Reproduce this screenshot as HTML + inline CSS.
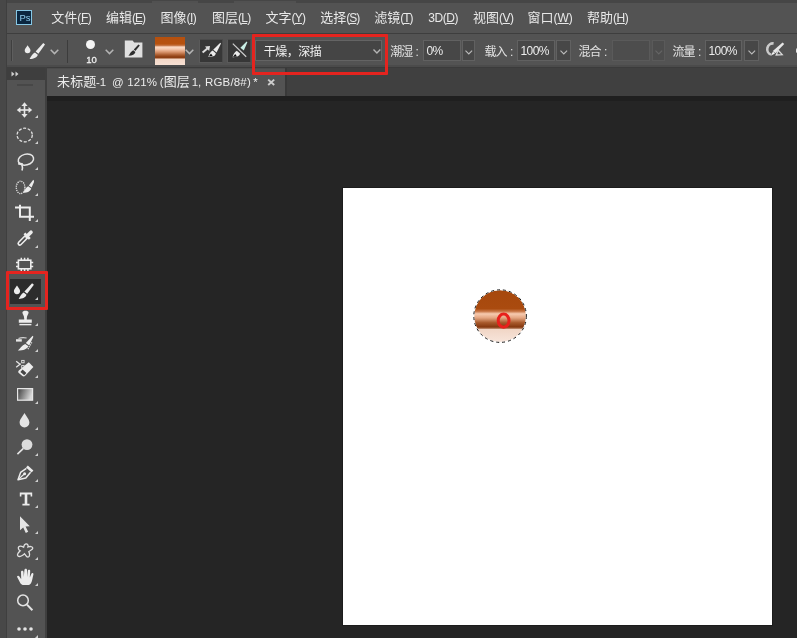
<!DOCTYPE html>
<html lang="zh-CN">
<head>
<meta charset="utf-8">
<title>Photoshop</title>
<style>
html,body{margin:0;padding:0;}
body{will-change:transform;width:797px;height:638px;overflow:hidden;background:#252525;position:relative;font-family:"Liberation Sans","Noto Sans CJK SC",sans-serif;font-size:13px;color:#e6e6e6;}
.abs{position:absolute;}
#topstrip{left:0;top:0;width:797px;height:3px;background:#464646;}
#menubar{left:0;top:3px;width:797px;height:30px;background:#535353;}
#menuline{left:0;top:33px;width:797px;height:1px;background:#3e3e3e;}
#optbar{left:0;top:34px;width:797px;height:31px;background:#535353;}
#optline{left:0;top:65px;width:797px;height:2px;background:#4b4b4b;}
#optline2{left:47px;top:67px;width:750px;height:2.300px;background:#3b3b3b;}
#tabbar{left:0;top:68px;width:797px;height:28px;background:#404040;}
#tab{left:47px;top:68px;width:237.500px;height:28px;background:#535353;border-top:1px solid #4c4c4c;box-sizing:border-box;}
#tabsep{left:284.500px;top:68px;width:2px;height:28px;background:#393939;}
#toolbar{left:0;top:67px;width:47px;height:571px;background:#535353;}
#toolhead{left:7px;top:66.500px;width:38px;height:13px;background:#3e3e3e;}
#leftstrip{left:0;top:0;width:7px;height:638px;background:#484848;border-right:1px solid #3f3f3f;box-sizing:border-box;}
#toolsep{left:44.500px;top:67px;width:2.500px;height:571px;background:#3f3f3f;}
#canvasbg{left:47px;top:96px;width:750px;height:542px;background:#252525;border-top:5px solid #1f1f1f;box-sizing:border-box;}
#doc{left:343px;top:188px;width:429px;height:437px;background:#fff;box-shadow:0 0 0 1px #1c1c1c;}
.mi{top:9px;height:18px;line-height:18px;white-space:nowrap;font-size:13px;color:#e8e8e8;}
.la{font-size:12px;}
.mi u{text-decoration:underline;text-underline-offset:1px;}
.lbl i{font-style:normal;margin-left:3.200px;}
.lbl{top:42.500px;height:18px;line-height:18px;white-space:nowrap;font-size:12px;color:#e2e2e2;letter-spacing:-0.900px;}
.fld{top:40px;height:20.500px;background:#474747;border:1px solid #616161;box-sizing:border-box;font-size:12px;line-height:20.500px;color:#ececec;padding-left:2.500px;letter-spacing:-0.550px;white-space:nowrap;}
.dis{background:#4d4d4d !important;border-color:#5a5a5a !important;}
.chv{top:40px;height:20.500px;width:15px;background:#474747;border:1px solid #616161;box-sizing:border-box;}
</style>
</head>
<body>
<div class="abs" id="topstrip"></div>
<div class="abs" id="menubar"></div>
<div class="abs" style="left:152px;top:0.500px;width:46px;height:2px;background:#565656;opacity:0.700;"></div>
<div class="abs" style="left:234px;top:0.500px;width:62px;height:2px;background:#565656;opacity:0.700;"></div>
<div class="abs" id="menuline"></div>
<div class="abs" id="optbar"></div>
<div class="abs" id="optline"></div>
<div class="abs" id="optline2"></div>
<div class="abs" id="tabbar"></div>
<div class="abs" id="canvasbg"></div>
<div class="abs" id="tab"></div>
<div class="abs" id="tabsep"></div>
<div class="abs" id="toolbar"></div>
<div class="abs" id="leftstrip"></div>
<div class="abs" id="toolsep"></div>
<div class="abs" id="toolhead"></div>
<div class="abs" id="doc"></div>

<!-- menu -->
<div class="abs mi" style="left:51.3px">文件<span class="la" style="letter-spacing:-0.41px">(<u>F</u>)</span></div>
<div class="abs mi" style="left:106.0px">编辑<span class="la" style="letter-spacing:-1.04px">(<u>E</u>)</span></div>
<div class="abs mi" style="left:160.4px">图像<span class="la" style="letter-spacing:-0.48px">(<u>I</u>)</span></div>
<div class="abs mi" style="left:211.9px">图层<span class="la" style="letter-spacing:-0.70px">(<u>L</u>)</span></div>
<div class="abs mi" style="left:265.6px">文字<span class="la" style="letter-spacing:-0.81px">(<u>Y</u>)</span></div>
<div class="abs mi" style="left:320.3px">选择<span class="la" style="letter-spacing:-1.04px">(<u>S</u>)</span></div>
<div class="abs mi" style="left:374.2px">滤镜<span class="la" style="letter-spacing:-0.98px">(<u>T</u>)</span></div>
<div class="abs mi" style="left:428.3px"><span class="la" style="letter-spacing:-0.44px">3D(<u>D</u>)</span></div>
<div class="abs mi" style="left:473.0px">视图<span class="la" style="letter-spacing:-0.57px">(<u>V</u>)</span></div>
<div class="abs mi" style="left:527.6px">窗口<span class="la" style="letter-spacing:-0.11px">(<u>W</u>)</span></div>
<div class="abs mi" style="left:587.0px">帮助<span class="la" style="letter-spacing:-0.43px">(<u>H</u>)</span></div>

<!-- Ps logo -->
<div class="abs" style="left:16px;top:9.500px;width:16px;height:15.200px;box-sizing:border-box;background:#0b2740;border:1px solid #86c8e6;"></div>
<div class="abs" style="left:19.600px;top:10.800px;width:12px;height:14px;line-height:14px;font-size:9.500px;color:#8fcdee;letter-spacing:-0.300px;white-space:nowrap;">Ps</div>

<!-- options bar: grip + tool preset -->
<div class="abs" style="left:11px;top:40px;width:1px;height:21px;background:#3f3f3f;"></div>
<div class="abs" style="left:12px;top:40px;width:1px;height:21px;background:#5e5e5e;"></div>
<svg class="abs" style="left:18px;top:36px" width="46" height="30" viewBox="18 36 46 30">
  <path d="M27.600 45.200 C28.800 47.200 30.500 48.700 30.500 50.300 A2.900 2.900 0 0 1 24.700 50.300 C24.700 48.700 26.400 47.200 27.600 45.200Z" fill="#ececec"/>
  <path d="M43.300 43 L45 44.400 L38.400 53.700 L35.600 51.500Z" fill="#ececec"/>
  <path d="M34.900 52.400 L37.800 54.700 C37.200 57.200 34 59 29.600 59.100 C30.800 56.600 32.200 54 34.900 52.400Z" fill="#ececec"/>
</svg>
<svg class="abs chev" style="left:50px;top:49px" width="9" height="6" viewBox="0 0 9 6"><path d="M0.7 0.8 L4.5 4.6 L8.3 0.8" fill="none" stroke="#b4b4b4" stroke-width="1.500"/></svg>
<div class="abs" style="left:67px;top:40px;width:1px;height:23px;background:#3c3c3c;"></div>

<!-- brush size -->
<div class="abs" style="left:86px;top:40px;width:9px;height:9px;border-radius:50%;background:#f4f4f4;"></div>
<div class="abs" style="left:80.500px;top:55.300px;width:22px;height:10px;line-height:10px;text-align:center;font-size:9.500px;color:#efefef;-webkit-text-stroke:0.300px #efefef;">10</div>
<svg class="abs chev" style="left:105px;top:49px" width="9" height="6" viewBox="0 0 9 6"><path d="M0.7 0.8 L4.5 4.6 L8.3 0.8" fill="none" stroke="#b4b4b4" stroke-width="1.500"/></svg>

<!-- brush panel icon -->
<svg class="abs" style="left:118px;top:34px" width="32" height="30" viewBox="118 34 32 30">
  <path d="M124.800 40.600 L132.600 40.600 L134.200 42.600 L142.400 42.600 L142.400 57.500 L124.800 57.500Z" fill="#e0e0e0"/>
  <path d="M138.400 44.400 L139.800 45.600 L135.400 51 L133.800 49.600Z" fill="#2e2e2e"/>
  <path d="M133.200 50.200 L135.400 52 C135 54.400 132.400 55.800 128.400 55.800 C129.800 54 130.800 51.400 133.200 50.200Z" fill="#2e2e2e"/>
</svg>

<!-- gradient swatch -->
<div class="abs" style="left:155px;top:37px;width:30px;height:28px;background:linear-gradient(to bottom,#b5500f 0px,#b7520f 7px,#c77645 8.5px,#fbd9c4 10px,#f6c9ae 12px,#d9956e 15px,#a95a2c 18px,#8a3a10 20px,#8f4216 21px,#f3d7c7 22px,#f7e0d3 28px);"></div>
<svg class="abs chev" style="left:185px;top:49px" width="9" height="6" viewBox="0 0 9 6"><path d="M0.7 0.8 L4.5 4.6 L8.3 0.8" fill="none" stroke="#b4b4b4" stroke-width="1.500"/></svg>

<!-- two toggle buttons -->
<div class="abs" style="left:199px;top:38.500px;width:24.300px;height:24.800px;box-sizing:border-box;background:#373737;border:1px solid #5a5a5a;border-top-color:#4a4a4a;border-right-color:#4a4a4a;"></div>
<div class="abs" style="left:227px;top:38.500px;width:23.500px;height:24.800px;box-sizing:border-box;background:#373737;border:1px solid #5a5a5a;border-top-color:#4a4a4a;border-right-color:#4a4a4a;"></div>
<svg class="abs" style="left:196px;top:36px" width="58" height="30" viewBox="196 36 58 30">
  <path d="M220.300 42.800 L221 43.600 L216.600 52.600 L213.200 49.800Z" fill="#ececec"/>
  <path d="M212.600 50.600 L215.800 53.300 C215.600 55.600 213.200 57.200 208.400 57 C209 54.600 210.200 52 212.600 50.600Z" fill="#ececec"/>
  <path d="M208.800 56.600 L211 53.600 L212.800 56.200Z" fill="#101010"/>
  <path d="M202.600 52.600 L207.400 48.600" stroke="#dedede" stroke-width="2" fill="none"/>
  <path d="M205 46.400 L210 46 L209.200 51Z" fill="#dedede"/>
  <path d="M246.600 41.400 L247.400 42.200 L243.800 50.600 L240.400 47.800Z" fill="#c9efe6"/>
  <path d="M236.800 50.800 L240 53.600 C239.800 55.800 237.400 57.400 232.600 57.200 C233.200 54.800 234.400 52.200 236.800 50.800Z" fill="#ececec"/>
  <path d="M232.900 56.900 L235.200 54 L237 56.400Z" fill="#101010"/>
  <path d="M232.800 43.600 L246.200 56.700" stroke="#cfcfcf" stroke-width="1.200" fill="none"/>
</svg>
<!-- preset dropdown -->
<div class="abs" style="left:255px;top:40px;width:127px;height:21px;box-sizing:border-box;background:#454545;border:1px solid #646464;"></div>
<div class="abs" style="left:263.800px;top:42.500px;height:18px;line-height:18px;font-size:12px;color:#f0f0f0;white-space:nowrap;letter-spacing:-0.500px;">干燥，深描</div>
<svg class="abs chev" style="left:372.800px;top:49.300px" width="8" height="5" viewBox="0 0 8 5"><path d="M0.500 0.600 L3.900 4 L7.300 0.600" fill="none" stroke="#b4b4b4" stroke-width="1.400"/></svg>
<div class="abs" style="left:251.500px;top:34.200px;width:136.100px;height:40.600px;box-sizing:border-box;border:3.300px solid #e4241f;border-radius:1px;"></div>

<!-- numeric fields -->
<div class="abs fld" style="left:423px;width:38px;">0%</div>
<div class="abs chv" style="left:462px;width:13px;"></div>
<svg class="abs chev" style="left:465px;top:49.500px" width="8" height="5" viewBox="0 0 8 5"><path d="M0.500 0.600 L3.800 3.900 L7.100 0.600" fill="none" stroke="#bcbcbc" stroke-width="1.100"/></svg>

<div class="abs fld" style="left:517px;width:38px;">100%</div>
<div class="abs chv" style="left:556px;width:15px;"></div>
<svg class="abs chev" style="left:560px;top:49.500px" width="8" height="5" viewBox="0 0 8 5"><path d="M0.500 0.600 L3.800 3.900 L7.100 0.600" fill="none" stroke="#bcbcbc" stroke-width="1.100"/></svg>

<div class="abs fld dis" style="left:612px;width:38px;"></div>
<div class="abs chv dis" style="left:652px;width:13px;"></div>
<svg class="abs chev" style="left:655px;top:49.500px" width="8" height="5" viewBox="0 0 8 5"><path d="M0.500 0.600 L3.800 3.900 L7.100 0.600" fill="none" stroke="#666666" stroke-width="1.100"/></svg>

<div class="abs fld" style="left:705px;width:37px;">100%</div>
<div class="abs chv" style="left:744px;width:15px;"></div>
<svg class="abs chev" style="left:748px;top:49.500px" width="8" height="5" viewBox="0 0 8 5"><path d="M0.500 0.600 L3.800 3.900 L7.100 0.600" fill="none" stroke="#bcbcbc" stroke-width="1.100"/></svg>

<!-- airbrush icon -->
<svg class="abs" style="left:757px;top:36px" width="40" height="30" viewBox="757 36 40 30">
  <path d="M773.600 43.400 A5.800 5.800 0 0 0 771 54.600" fill="none" stroke="#c9c9c9" stroke-width="2.600"/>
  <path d="M782.600 42.400 L784.200 44 L775.400 53.200 L772.800 51Z" fill="#e6e6e6"/>
  <path d="M773 51.600 L775 53.400 L770.800 55.800Z" fill="#f2f2f2"/>
  <path d="M778.200 50.200 L782.200 54.600 L776.200 55Z" fill="none" stroke="#dadada" stroke-width="1.300"/>
</svg>
<div class="abs" style="left:795.600px;top:47.600px;width:3px;height:5.400px;border-radius:1.500px 0 0 1.500px;background:#e4e4e4;"></div>

<!-- selected tool bg -->
<div class="abs" style="left:9.600px;top:279px;width:31.200px;height:24.500px;background:#2c2c2c;"></div>
<!-- toolbar icons -->
<svg class="abs" style="left:0;top:67px" width="47" height="571" viewBox="0 67 47 571" fill="none" stroke-linecap="butt">
  <!-- header chevrons -->
  <path d="M11.500 71.500 L14.500 74 L11.500 76.500Z M15.500 71.500 L18.500 74 L15.500 76.500Z" fill="#d0d0d0"/>
  <!-- grip -->
  <rect x="17" y="84" width="16" height="2" fill="#474747"/>
  <!-- move -->
  <g fill="#e6e6e6" stroke="none">
    <rect x="23.7" y="105" width="1.6" height="10"/>
    <rect x="19.5" y="109.2" width="10" height="1.6"/>
    <path d="M24.5 102.3 L27.6 106 L21.4 106Z"/>
    <path d="M24.5 117.7 L27.6 114 L21.4 114Z"/>
    <path d="M16.8 110 L20.5 106.9 L20.5 113.1Z"/>
    <path d="M32.2 110 L28.5 106.9 L28.5 113.1Z"/>
  </g>
  <path d="M38 115 L38 118 L35 118Z" fill="#cfcfcf"/>
  <!-- ellipse marquee -->
  <ellipse cx="24.7" cy="135" rx="7.6" ry="6.8" stroke="#e0e0e0" stroke-width="1.3" stroke-dasharray="3 1.6"/>
  <path d="M38 141 L38 144 L35 144Z" fill="#cfcfcf"/>
  <!-- lasso -->
  <ellipse cx="25.900" cy="159.600" rx="7.800" ry="5.400" stroke="#e6e6e6" stroke-width="1.500" transform="rotate(-14 25.900 159.600)"/>
  <path d="M18.200 163.400 L22.800 164.400" stroke="#e6e6e6" stroke-width="2.200"/>
  <path d="M22 164.800 C22.600 166.800 22.600 168.600 22 170.600" stroke="#e6e6e6" stroke-width="1.600"/>
  <path d="M38 167 L38 170 L35 170Z" fill="#cfcfcf"/>
  <!-- quick selection -->
  <ellipse cx="20.600" cy="187.400" rx="4.300" ry="6.200" stroke="#ececec" stroke-width="1.300" stroke-dasharray="1.100 1"/>
  <path d="M33.300 179.800 C34 180.600 34.200 181.400 33.800 182.400 L31.600 187.600 L28.800 185.600Z" fill="#ececec"/>
  <path d="M28.200 186.200 L31.200 188.400 C30.600 191.200 27.400 192.800 23.200 192.800 C24.600 190.400 25.600 187.600 28.200 186.200Z" fill="#ececec"/>
  <path d="M38 193 L38 196 L35 196Z" fill="#cfcfcf"/>
  <!-- crop -->
  <path d="M20 204.8 L20 216.8 L34 216.8 M15 207.6 L29.8 207.6 L29.8 221" stroke="#ececec" stroke-width="2"/>
  <path d="M38 219 L38 222 L35 222Z" fill="#cfcfcf"/>
  <!-- eyedropper -->
  <path d="M19.700 243.500 L26.200 237" stroke="#ececec" stroke-width="4.600" stroke-linecap="round"/>
  <path d="M19.900 243.300 L25 238.200" stroke="#4a4a4a" stroke-width="1.700" stroke-linecap="round"/>
  <path d="M24.400 233.400 L29.800 238.800" stroke="#ececec" stroke-width="2.600"/>
  <path d="M27.400 235.800 L31 232.200" stroke="#ececec" stroke-width="3.600" stroke-linecap="round"/>
  <path d="M38 245 L38 248 L35 248Z" fill="#cfcfcf"/>
  <!-- patch/frame -->
  <rect x="18.400" y="260.200" width="12.400" height="8.600" stroke="#ececec" stroke-width="1.600"/>
  <path d="M21.300 257.800 L21.300 260 M24.600 257.800 L24.600 260 M27.900 257.800 L27.900 260 M21.300 269 L21.300 271.200 M24.600 269 L24.600 271.200 M27.900 269 L27.900 271.200 M16 262.400 L18.200 262.400 M16 266.600 L18.200 266.600 M31 262.400 L33.200 262.400 M31 266.600 L33.200 266.600" stroke="#ececec" stroke-width="1.500"/>
  <!-- mixer brush (selected) -->
  <g transform="translate(0.500 0.900)">
  <path d="M16.500 284.600 C17.800 286.700 19.600 288.400 19.600 290.200 A3.100 3.100 0 0 1 13.400 290.200 C13.400 288.400 15.200 286.700 16.500 284.600Z" fill="#ececec"/>
  <path d="M31.600 282.400 L33.400 283.900 L26.600 292.900 L23.900 290.700Z" fill="#ececec"/>
  <path d="M23.200 291.600 L26 293.900 C25.400 296.300 22.400 298 18.200 298.100 C19.400 295.700 20.600 293.200 23.200 291.600Z" fill="#ececec"/>
  </g>
  <path d="M38 297 L38 300 L35 300Z" fill="#cfcfcf"/>
  <!-- stamp -->
  <path d="M22.400 312.600 C22.400 310.200 28.600 310.200 28.600 312.600 C28.600 314.600 26.800 315.600 26.800 318.400 L26.800 319.600 L31.800 319.600 L31.800 322.700 L18.800 322.700 L18.800 319.600 L24.200 319.600 L24.200 318.400 C24.200 315.600 22.400 314.600 22.400 312.600Z" fill="#ececec"/>
  <rect x="19.400" y="323.900" width="12" height="1.400" fill="#ececec"/>
  <path d="M38 323 L38 326 L35 326Z" fill="#cfcfcf"/>
  <!-- history brush -->
  <path d="M32.600 335.800 L33.400 336.800 L29.200 345.400 L25.800 343Z" fill="#ececec"/>
  <path d="M25.200 344 L28.400 346.200 C27.200 348.800 23.400 350.600 17.800 350.600 C20 348.600 22 345.400 25.200 344Z" fill="#ececec"/>
  <path d="M16 340.400 L21.800 340.400" stroke="#e6e6e6" stroke-width="2.400"/>
  <path d="M18.500 338.600 C21 337.400 24 337.400 26.600 338" stroke="#d4d4d4" stroke-width="1.100"/>
  <path d="M31.800 342.400 L27.600 349.800" stroke="#dcdcdc" stroke-width="1.300" stroke-dasharray="1.200 1"/>
  <path d="M38 349 L38 352 L35 352Z" fill="#cfcfcf"/>
  <!-- background eraser -->
  <path d="M28.800 362.200 L33.400 367 L25.200 375.800 C24.400 376.600 23.200 376.600 22.400 376 L18.800 373 C18 372.200 18 371.200 18.800 370.400Z" fill="#ececec"/>
  <path d="M22.600 369.600 L26.400 373 L24.200 375.200 L20.400 372Z" fill="#454545"/>
  <path d="M16.200 361.200 L20 364.200 L16.200 367.200 M20 364.200 L21 364.200" stroke="#e6e6e6" stroke-width="1.300" fill="none"/>
  <rect x="21.700" y="360.400" width="2.400" height="2.400" stroke="#e6e6e6" stroke-width="0.900" fill="none"/>
  <rect x="21.700" y="365.600" width="2.400" height="2.400" stroke="#e6e6e6" stroke-width="0.900" fill="none"/>
  <path d="M38 375 L38 378 L35 378Z" fill="#cfcfcf"/>
  <!-- gradient -->
  <defs><linearGradient id="tg" x1="0" y1="0" x2="1" y2="0.3"><stop offset="0" stop-color="#3a3a3a"/><stop offset="1" stop-color="#d8d8d8"/></linearGradient></defs>
  <rect x="17.6" y="388.600" width="15" height="11.6" fill="url(#tg)" stroke="#e6e6e6" stroke-width="1.2"/>
  <path d="M38 401 L38 404 L35 404Z" fill="#cfcfcf"/>
  <!-- blur drop -->
  <path d="M24.5 413 C26.4 416.6 29.4 419.4 29.4 422.6 A4.9 4.9 0 0 1 19.6 422.6 C19.6 419.4 22.6 416.6 24.5 413Z" fill="#e4e4e4"/>
  <path d="M38 427 L38 430 L35 430Z" fill="#cfcfcf"/>
  <!-- dodge -->
  <circle cx="27" cy="444.600" r="5.4" fill="#dcdcdc"/>
  <path d="M23.4 448.400 L17.4 454.2" stroke="#e4e4e4" stroke-width="1.6"/>
  <path d="M38 453 L38 456 L35 456Z" fill="#cfcfcf"/>
  <!-- pen -->
  <path d="M27.800 465.600 L33.400 470.600 L31.600 472.600 L26 467.600Z" fill="#ececec"/>
  <path d="M26.400 468.400 L20.600 472.400 L18 479.800 L25.800 478 L30.600 472.200" stroke="#ececec" stroke-width="1.500" stroke-linejoin="round"/>
  <path d="M18.200 479.600 L24 474.200" stroke="#ececec" stroke-width="1.200"/>
  <circle cx="24.600" cy="473.800" r="1.500" fill="#ececec"/>
  <path d="M38 479 L38 482 L35 482Z" fill="#cfcfcf"/>
  <!-- T -->
  <path d="M19.800 492.400 L32.200 492.400 L32.200 496.400 L30.600 496.400 L30.600 494.400 L27.300 494.400 L27.300 503.800 L29.600 503.800 L29.600 505.600 L22.400 505.600 L22.400 503.800 L24.700 503.800 L24.700 494.400 L21.400 494.400 L21.400 496.400 L19.800 496.400Z" fill="#ececec"/>
  <path d="M38 505 L38 508 L35 508Z" fill="#cfcfcf"/>
  <!-- path selection arrow -->
  <path d="M20 516.200 L20 530.200 L23.200 527.400 L25.800 533 L28.200 531.800 L25.600 526.400 L29.800 526.200Z" fill="#e4e4e4"/>
  <path d="M38 531 L38 534 L35 534Z" fill="#cfcfcf"/>
  <!-- custom shape -->
  <path d="M25.600 544 C27.600 543.400 28.400 545.400 28 547 C29.800 546.200 32.600 546.200 32.800 548 C33 549.800 30 550.400 28.800 551.600 C29.600 553 30.200 556.400 28.400 557 C26.600 557.600 25.600 555 24.600 553.800 C23 555.400 19.600 557.400 18 556 C16.400 554.600 18.800 552.200 20.200 550.800 C18.800 550 17.600 548 18.800 546.800 C20 545.600 22.400 546.600 23.600 547.200 C23.800 546 24 544.400 25.600 544Z" stroke="#e0e0e0" stroke-width="1.300"/>
  <path d="M38 557 L38 560 L35 560Z" fill="#cfcfcf"/>
  <!-- hand -->
  <path d="M17 576.800 C17.200 575.600 18.600 575.400 19.400 576.400 L21.200 579.200 L21 572 C21 570.200 23.400 570.200 23.500 572 L23.800 577 L24.400 570.200 C24.600 568.400 27 568.400 27 570.200 L27 577 L27.800 570.800 C28 569.200 30.300 569.400 30.200 571 L29.800 577.600 L31.400 573.800 C32 572.400 33.800 573 33.400 574.400 C32.600 577.400 32.400 580.400 31 583.200 C30.200 584.600 29 585 27.600 585 L23.600 585 C22.200 585 21.200 584.400 20.400 583.200Z" fill="#ececec"/>
  <path d="M38 583 L38 586 L35 586Z" fill="#cfcfcf"/>
  <!-- zoom -->
  <circle cx="23" cy="600.400" r="5.300" stroke="#e4e4e4" stroke-width="1.500"/>
  <path d="M27 604.600 L32.400 610.200" stroke="#e4e4e4" stroke-width="2"/>
  <!-- dots -->
  <circle cx="19" cy="629" r="1.800" fill="#e4e4e4"/><circle cx="25" cy="629" r="1.800" fill="#e4e4e4"/><circle cx="31" cy="629" r="1.800" fill="#e4e4e4"/>
  <path d="M38 635 L38 638 L35 638Z" fill="#cfcfcf"/>
</svg>
<!-- red highlight on tool -->
<div class="abs" style="left:6px;top:271.300px;width:42.200px;height:38.800px;box-sizing:border-box;border:3.400px solid #e4241f;border-radius:1px;"></div>


<!-- brush stroke on canvas -->
<svg class="abs" style="left:468px;top:284px" width="64" height="64" viewBox="468 284 64 64">
  <defs>
    <linearGradient id="cg" gradientUnits="userSpaceOnUse" x1="0" y1="289.5" x2="0" y2="343">
      <stop offset="0" stop-color="#a6480d"/>
      <stop offset="0.36" stop-color="#aa4b0f"/>
      <stop offset="0.41" stop-color="#c9794a"/>
      <stop offset="0.455" stop-color="#f7cbb0"/>
      <stop offset="0.53" stop-color="#e4a682"/>
      <stop offset="0.62" stop-color="#a85a2c"/>
      <stop offset="0.70" stop-color="#85380f"/>
      <stop offset="0.725" stop-color="#a86a48"/>
      <stop offset="0.745" stop-color="#f1d6c6"/>
      <stop offset="1" stop-color="#f8e6dc"/>
    </linearGradient>
  </defs>
  <circle cx="500.1" cy="316.1" r="26.2" fill="url(#cg)"/>
  <circle cx="500.1" cy="316.1" r="26.3" fill="none" stroke="#ffffff" stroke-width="1"/>
  <circle cx="500.1" cy="316.1" r="26.3" fill="none" stroke="#1a1a1a" stroke-width="1" stroke-dasharray="3 3"/>
  <ellipse cx="503.6" cy="320.6" rx="5.4" ry="6.6" fill="none" stroke="#e8211c" stroke-width="3"/>
</svg>

<!-- tab title -->
<div class="abs" id="tabtitle" style="left:57px;top:73px;width:215px;height:18px;line-height:18px;font-size:13px;color:#ececec;white-space:nowrap;"><span style="margin-left:0.10px;font-size:13px;letter-spacing:0.06px">未标题</span><span style="margin-left:-0.30px;font-size:11.5px;letter-spacing:0.00px">-1</span><span style="margin-left:5.67px;font-size:11.5px;letter-spacing:0.00px">@</span><span style="margin-left:3.81px;font-size:11.5px;letter-spacing:0.07px">121%</span><span style="margin-left:2.70px;font-size:11.5px;letter-spacing:0.00px">(</span><span style="margin-left:0.16px;font-size:13px;letter-spacing:0.00px">图层</span><span style="margin-left:1.88px;font-size:11.5px;letter-spacing:0.00px">1,</span><span style="margin-left:3.71px;font-size:11.5px;letter-spacing:0.18px">RGB/8#)</span><span style="margin-left:2.30px;font-size:11.5px;letter-spacing:0.00px">*</span></div>

<svg class="abs" style="left:266px;top:77px" width="10" height="10" viewBox="0 0 10 10"><path d="M2.2 2.6 L8.200 8 M8.200 2.6 L2.2 8" stroke="#cdcdcd" stroke-width="1.900" fill="none"/></svg>
<!-- options labels -->
<div class="abs lbl" style="left:390.200px">潮湿<i>:</i></div>
<div class="abs lbl" style="left:484.500px">载入<i>:</i></div>
<div class="abs lbl" style="left:578.500px">混合<i>:</i></div>
<div class="abs lbl" style="left:672.500px">流量<i>:</i></div>
</body>
</html>
